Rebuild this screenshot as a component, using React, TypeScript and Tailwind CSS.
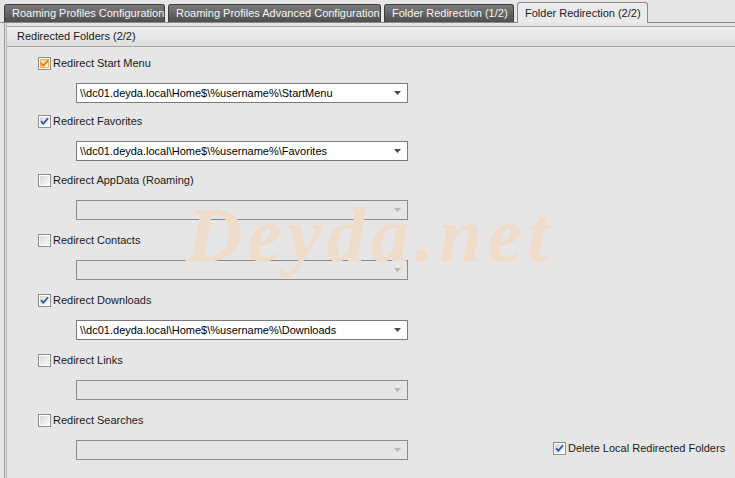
const font = { fontFamily: '"Liberation Sans", Arial, sans-serif' }

type Check = "off" | "on" | "hot"

const CheckBox: React.FC<{ state: Check }> = ({ state }) => (
    <svg width="13" height="13" viewBox="0 0 13 13" className="shrink-0">
        <defs>
            <linearGradient id={"cb-" + state} x1="0" y1="0" x2="1" y2="1">
                <stop offset="0" stopColor={state === "hot" ? "#f7d8a8" : "#d8d8d8"} />
                <stop offset="1" stopColor={state === "hot" ? "#fff4e0" : "#fbfbfb"} />
            </linearGradient>
        </defs>
        <rect x="0.5" y="0.5" width="12" height="12" fill="#fff" stroke="#8e8f8f" />
        <rect x="2" y="2" width="9" height="9" fill={`url(#cb-${state})`} />
        {state === "hot" && <rect x="2.5" y="2.5" width="8" height="8" fill="none" stroke="#f3b04a" />}
        {state !== "off" && (
            <path
                d="M3 6.2 L5.4 8.8 L10 3.2"
                fill="none"
                stroke={state === "hot" ? "#e07a10" : "#2856a8"}
                strokeWidth="1.8"
                strokeLinejoin="round"
            />
        )}
    </svg>
)

const Combo: React.FC<{ value?: string }> = ({ value }) => (
    <div
        className={
            "ml-[76px] w-[332px] h-[20px] flex items-center border pl-[3px] pr-[6px] " +
            (value ? "bg-white border-[#7a7a7a]" : "bg-transparent border-[#8c8c8c]")
        }
    >
        <span className="flex-1 truncate text-[11px] text-black">{value}</span>
        <svg width="7" height="4" viewBox="0 0 7 4">
            <path d="M0 0 H7 L3.5 4 Z" fill={value ? "#4a4a4a" : "#b4b4b4"} />
        </svg>
    </div>
)

const Row: React.FC<{ label: string; state: Check }> = ({ label, state }) => (
    <label className="ml-[38px] flex items-center gap-[1px] h-[14px] text-[11px] text-[#1a1a1a] whitespace-nowrap">
        <CheckBox state={state} />
        <span className="pl-px">{label}</span>
    </label>
)

const tabs = [
    { title: "Roaming Profiles Configuration", w: "w-[161px]" },
    { title: "Roaming Profiles Advanced Configuration", w: "w-[213px]" },
    { title: "Folder Redirection (1/2)", w: "w-[130px]" },
]

const folders: { label: string; state: Check; value?: string; gap: string }[] = [
    { label: "Redirect Start Menu", state: "hot", value: "\\\\dc01.deyda.local\\Home$\\%username%\\StartMenu", gap: "mt-px" },
    { label: "Redirect Favorites", state: "on", value: "\\\\dc01.deyda.local\\Home$\\%username%\\Favorites", gap: "mt-[11px]" },
    { label: "Redirect AppData (Roaming)", state: "off", gap: "mt-[12px]" },
    { label: "Redirect Contacts", state: "off", gap: "mt-[13px]" },
    { label: "Redirect Downloads", state: "on", value: "\\\\dc01.deyda.local\\Home$\\%username%\\Downloads", gap: "mt-[13px]" },
    { label: "Redirect Links", state: "off", gap: "mt-[13px]" },
    { label: "Redirect Searches", state: "off", gap: "mt-[13px]" },
]

export default function App() {
    return (
        <div className="w-[735px] h-[478px] overflow-hidden bg-[#e6e6e6] flex flex-col relative" style={font}>
            {/* tab strip */}
            <div className="h-[22px] flex items-end pl-[4px] gap-[3px] shrink-0">
                {tabs.map((t) => (
                    <div
                        key={t.title}
                        className={
                            t.w +
                            " h-[18px] pl-[7px] flex items-center whitespace-nowrap text-[11px] text-[#f4f4f4] rounded-t-[3px] border border-b-0 border-[#3e3e3e] bg-gradient-to-b from-[#7c7c7c] to-[#4f4f4f]"
                        }
                    >
                        {t.title}
                    </div>
                ))}
                <div className="w-[131px] h-[21px] -mb-[1px] pl-[7px] flex items-center whitespace-nowrap text-[11px] text-[#1a1a1a] rounded-t-[3px] border border-b-0 border-[#8a8a8a] bg-[#eaeaea] relative z-10">
                    Folder Redirection (2/2)
                </div>
            </div>

            {/* page */}
            <div className="flex-1 border-t border-[#8a8a8a] flex">
                <div className="w-[5px] border-r border-[#9a9a9a] bg-[#e6e6e6] shrink-0" />
                <div className="flex-1 ml-[1px] border-l border-[#b8b8b8] flex flex-col">
                    <div className="mt-[3px] h-[21px] border-t border-b border-[#a8a8a8] bg-gradient-to-b from-[#efefef] to-[#dedede] flex items-center pl-[10px] text-[11px] text-[#1a1a1a]">
                        Redirected Folders (2/2)
                    </div>

                    <div className="flex flex-col ml-[-7px] mt-[8px] relative">
                        {folders.map((f) => (
                            <div key={f.label} className={"flex flex-col " + f.gap}>
                                <Row label={f.label} state={f.state} />
                                <div className="mt-[13px]">
                                    <Combo value={f.value} />
                                </div>
                            </div>
                        ))}
                        <div className="absolute left-[553px] top-[385px]">
                            <label className="flex items-center gap-[1px] text-[11px] text-[#1a1a1a] whitespace-nowrap">
                                <CheckBox state="on" />
                                <span className="pl-px">Delete Local Redirected Folders</span>
                            </label>
                        </div>
                    </div>
                </div>
            </div>

            {/* watermark */}
            <span
                className="absolute left-[186px] top-[196px] pointer-events-none text-[78px] font-bold italic tracking-[5px] text-[#efdccb] leading-none"
                style={{ fontFamily: '"Liberation Serif", "DejaVu Serif", serif' }}
            >
                Deyda.net
            </span>
        </div>
    )
}
